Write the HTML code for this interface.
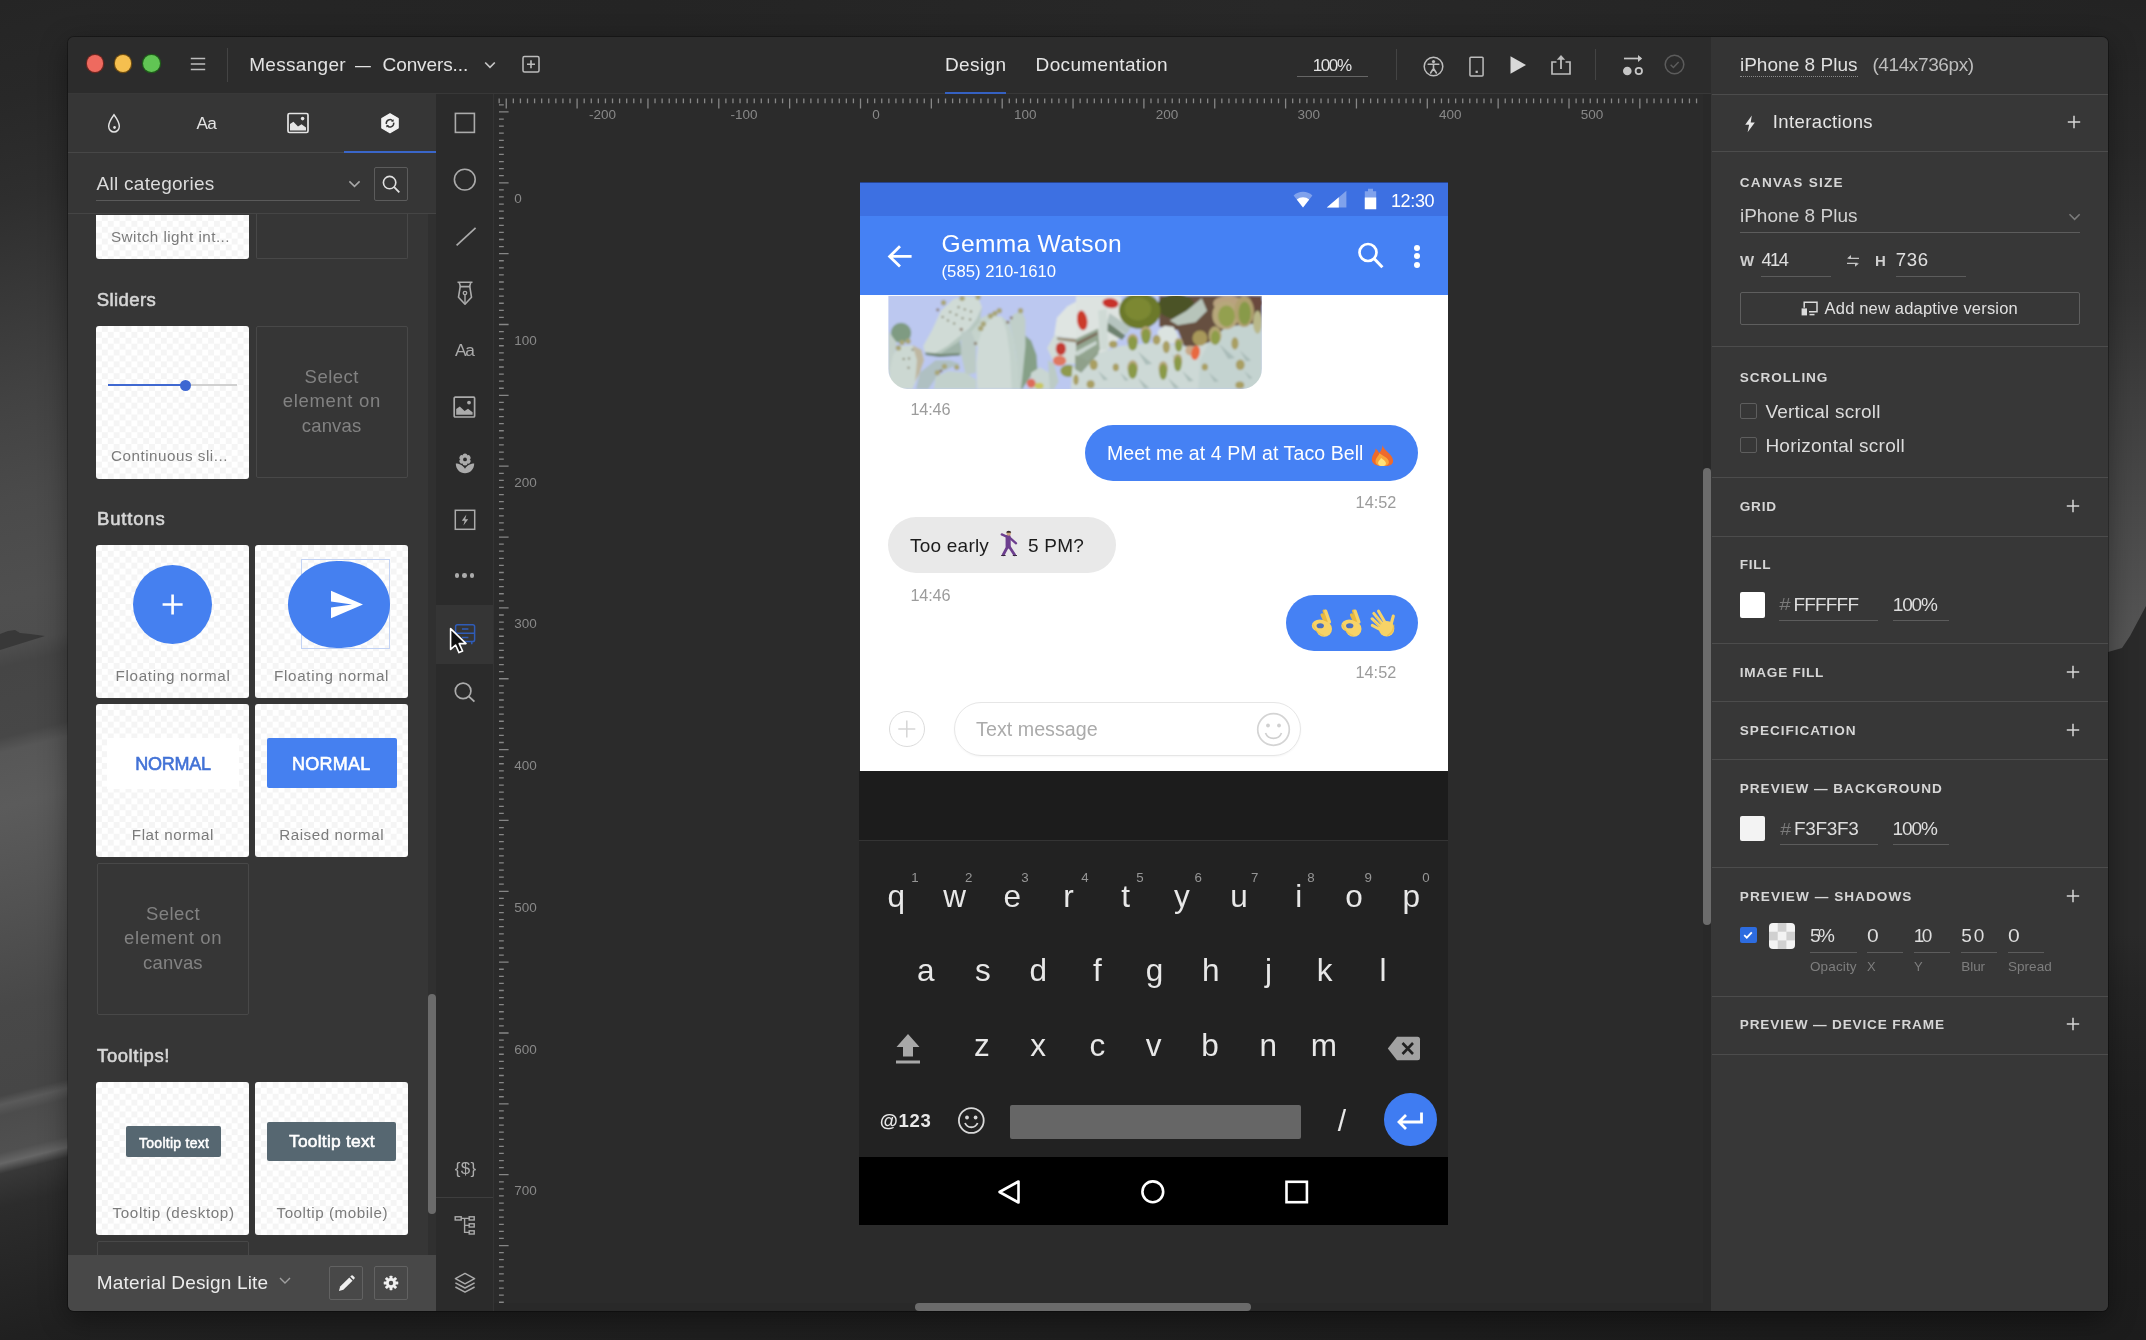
<!DOCTYPE html>
<html lang="en"><head><meta charset="utf-8"><title>Messanger - Conversation</title>
<style>
*{box-sizing:border-box;margin:0;padding:0}
html,body{width:2146px;height:1340px;overflow:hidden;background:#1d1d1d}
body{position:relative;font-family:"Liberation Sans",sans-serif;-webkit-font-smoothing:antialiased}
.a{position:absolute}
.t{position:absolute;white-space:nowrap;line-height:1}
svg{position:absolute;overflow:visible}
.card{position:absolute;width:153px;height:153px;border-radius:3px;
 background:repeating-conic-gradient(#f5f5f5 0% 25%,#fff 0% 50%) 0 0/11.800px 11.800px}
.ecard{position:absolute;width:152px;height:152px;border:1px solid #484848;border-radius:2px}
.ul{position:absolute;height:1px;background:#5c5c5c}
.hr{position:absolute;left:1712px;width:396px;height:1px;background:#4c4c4c}
</style></head>
<body>
<!-- p1_bg -->
<svg width="2146" height="1340" viewBox="0 0 2146 1340" style="left:0;top:0">
<defs>
<linearGradient id="gl" x1="0" y1="0" x2="0" y2="1"><stop offset="0" stop-color="#252525"/><stop offset="0.0714" stop-color="#282828"/><stop offset="0.1429" stop-color="#2e2e2e"/><stop offset="0.2143" stop-color="#383838"/><stop offset="0.2857" stop-color="#424242"/><stop offset="0.3571" stop-color="#4a4a4a"/><stop offset="0.4286" stop-color="#4f4f4f"/><stop offset="0.4629" stop-color="#4e4e4e"/><stop offset="0.4771" stop-color="#454545"/><stop offset="0.5271" stop-color="#474747"/><stop offset="0.5379" stop-color="#575757"/><stop offset="0.5771" stop-color="#5b5b5b"/><stop offset="0.6486" stop-color="#525252"/><stop offset="0.72" stop-color="#484848"/><stop offset="0.7829" stop-color="#464646"/><stop offset="0.7893" stop-color="#5a5a5a"/><stop offset="0.7971" stop-color="#4c4c4c"/><stop offset="0.8236" stop-color="#505050"/><stop offset="0.8314" stop-color="#666666"/><stop offset="0.8386" stop-color="#383838"/><stop offset="0.8629" stop-color="#2c2c2c"/><stop offset="0.9571" stop-color="#202020"/><stop offset="1" stop-color="#1e1e1e"/></linearGradient>
<linearGradient id="gr" x1="0" y1="0" x2="0" y2="1"><stop offset="0" stop-color="#232323"/><stop offset="0.1119" stop-color="#292929"/><stop offset="0.2239" stop-color="#343434"/><stop offset="0.2985" stop-color="#3f3f3f"/><stop offset="0.3881" stop-color="#4a4a4a"/><stop offset="0.4776" stop-color="#555555"/><stop offset="1" stop-color="#555555"/></linearGradient>
<linearGradient id="gd" x1="0" y1="0" x2="0" y2="1"><stop offset="0.4478" stop-color="#2a2a2a"/><stop offset="0.5224" stop-color="#252525"/><stop offset="0.6716" stop-color="#202020"/><stop offset="1" stop-color="#1c1c1c"/></linearGradient>
<linearGradient id="gt" x1="0" y1="0" x2="1" y2="0"><stop offset="0" stop-color="#262626"/><stop offset="0.3" stop-color="#242424"/><stop offset="0.6" stop-color="#282828"/><stop offset="1" stop-color="#232323"/></linearGradient>
<linearGradient id="gb" x1="0" y1="0" x2="1" y2="0"><stop offset="0" stop-color="#212121"/><stop offset="0.5" stop-color="#1e1e1e"/><stop offset="1" stop-color="#1b1b1b"/></linearGradient>
</defs>
<rect width="2146" height="1340" fill="#1e1e1e"/>
<rect x="0" y="0" width="2146" height="44" fill="url(#gt)"/>
<rect x="0" y="1296" width="2146" height="44" fill="url(#gb)"/>
<rect x="0" y="0" width="90" height="1400" fill="url(#gl)" transform="skewY(-14)"/>
<path d="M0 634L8 631L15 630L20 633L30 634L45 636L0 650Z" fill="#383838"/>
<rect x="2090" y="0" width="56" height="1340" fill="url(#gr)"/>
<path d="M2090 655L2108 652L2122 648L2130 636L2146 606V1340H2090Z" fill="url(#gd)"/>
</svg>
<!-- p2_title -->
<div class="a" style="left:68px;top:37px;width:2040px;height:1274px;background:#2b2b2b;border-radius:6px;box-shadow:0 8px 28px rgba(0,0,0,.4),0 0 0 1px rgba(0,0,0,.3);"></div>
<div class="a" id="win" style="left:0;top:0;width:2146px;height:1340px;clip-path:inset(37px 38px 29px 68px round 6px);will-change:transform">
<div class="a" style="left:68px;top:37px;width:1643px;height:57px;background:#2c2c2c;"></div>
<div class="a" style="left:68px;top:93px;width:1643px;height:1px;background:#383838;"></div>
<div class="a" style="left:1711px;top:37px;width:397px;height:1274px;background:#373737;"></div>
<div class="a" style="left:1711px;top:37px;width:397px;height:57px;background:#343434;"></div>
<div class="a" style="left:68px;top:94px;width:368px;height:1217px;background:#363636;"></div>
<div class="a" style="left:436px;top:94px;width:57px;height:1217px;background:#2b2b2b;"></div>
<div class="a" style="left:493px;top:94px;width:1218px;height:1217px;background:#2b2b2b;"></div>
<div class="a" style="left:86.5px;top:55.2px;width:16.8px;height:16.8px;background:#ee6a5f;border-radius:50%;box-shadow:0 0 0 1.200px #6b2620;"></div>
<div class="a" style="left:114.69999999999999px;top:55.2px;width:16.8px;height:16.8px;background:#f5bf4f;border-radius:50%;box-shadow:0 0 0 1.200px #6e4c10;"></div>
<div class="a" style="left:143.0px;top:55.2px;width:16.8px;height:16.8px;background:#61c554;border-radius:50%;box-shadow:0 0 0 1.200px #1f5a1a;"></div>
<svg style="left:190px;top:56px" width="16" height="16" viewBox="0 0 16 16"><path d="M0.8 2.6h14.4M0.8 8h14.4M0.8 13.4h14.4" stroke="#bdbdbd" stroke-width="1.5" fill="none"/></svg>
<div class="a" style="left:227px;top:48px;width:1px;height:34px;background:#444;"></div>
<span class="t" style="left:249.2px;top:55.0px;font-size:19px;color:#e2e2e2;letter-spacing:0.30px;">Messanger</span>
<span class="t" style="left:355.0px;top:55.0px;font-size:19px;color:#e2e2e2;transform:scaleX(0.832);transform-origin:0 0;">—</span>
<span class="t" style="left:382.6px;top:55.0px;font-size:19px;color:#e2e2e2;letter-spacing:-0.11px;">Convers...</span>
<svg style="left:484px;top:60px" width="12" height="10" viewBox="0 0 12 10"><path d="M1.2 2.5L6 7.3L10.8 2.5" stroke="#c6c6c6" stroke-width="1.7" fill="none"/></svg>
<svg style="left:522px;top:55px" width="18" height="18" viewBox="0 0 18 18"><rect x="1" y="1.5" width="16" height="15.5" rx="1.5" stroke="#bdbdbd" stroke-width="1.5" fill="none"/><path d="M9 5.2v8M5 9.2h8" stroke="#bdbdbd" stroke-width="1.6"/></svg>
<span class="t" style="left:945.0px;top:55.0px;font-size:19px;color:#e6e6e6;letter-spacing:0.37px;">Design</span>
<span class="t" style="left:1035.6px;top:55.0px;font-size:19px;color:#e6e6e6;letter-spacing:0.34px;">Documentation</span>
<div class="a" style="left:945px;top:92.4px;width:61px;height:2px;background:#3561c2;"></div>
<span class="t" style="left:1312.7px;top:56.5px;font-size:17px;color:#e2e2e2;letter-spacing:-1.39px;">100%</span>
<div class="a" style="left:1297px;top:76px;width:71px;height:1px;background:#666;"></div>
<div class="a" style="left:1396px;top:49px;width:1px;height:31px;background:#444;"></div>
<div class="a" style="left:1595px;top:49px;width:1px;height:31px;background:#444;"></div>
<svg style="left:1423px;top:56px" width="21" height="21" viewBox="0 0 21 21"><circle cx="10.5" cy="10.5" r="9.3" stroke="#bdbdbd" stroke-width="1.5" fill="none"/><circle cx="10.5" cy="5.6" r="1.6" fill="#bdbdbd"/><path d="M5.2 8.2h10.6M10.5 8.2v4.5M10.5 12.5L7.6 17M10.5 12.5L13.4 17" stroke="#bdbdbd" stroke-width="1.6" fill="none" stroke-linecap="round"/></svg>
<svg style="left:1468.500px;top:56px" width="15" height="21" viewBox="0 0 16 22"><rect x="1" y="1" width="14" height="20" rx="1" stroke="#bdbdbd" stroke-width="1.6" fill="none"/><rect x="7" y="15.5" width="2.4" height="2.4" fill="#bdbdbd"/></svg>
<svg style="left:1509px;top:55px" width="18" height="20" viewBox="0 0 18 20"><path d="M1.5 1.2L17 10L1.5 18.8Z" fill="#d8d8d8"/></svg>
<svg style="left:1550px;top:53px" width="22" height="23" viewBox="0 0 22 23"><path d="M6.5 9H2v12h18V9h-4.5" stroke="#bdbdbd" stroke-width="1.7" fill="none"/><path d="M11 16V4" stroke="#bdbdbd" stroke-width="1.8"/><path d="M6.8 6.8L11 2l4.2 4.8z" fill="#bdbdbd"/></svg>
<svg style="left:1621px;top:54px" width="24" height="22" viewBox="0 0 24 22"><path d="M3 4.5h17" stroke="#c6c6c6" stroke-width="1.7"/><path d="M17 1l4.2 3.5L17 8z" fill="#c6c6c6"/><circle cx="6.3" cy="17" r="4.3" fill="#c6c6c6"/><circle cx="17.8" cy="17" r="3.2" stroke="#c6c6c6" stroke-width="1.8" fill="none"/></svg>
<svg style="left:1664px;top:54px" width="21" height="21" viewBox="0 0 21 21"><circle cx="10.5" cy="10.5" r="9.3" stroke="#5c5c5c" stroke-width="1.5" fill="none"/><path d="M6.6 10.8l2.8 2.7L14.6 8" stroke="#5c5c5c" stroke-width="1.5" fill="none"/></svg>
<span class="t" style="left:1739.9px;top:54.8px;font-size:19px;color:#e0e0e0;letter-spacing:0.04px;">iPhone 8 Plus</span>
<div class="a" style="left:1740px;top:76px;width:118px;height:0px;border-top:1px dotted #8a8a8a;"></div>
<span class="t" style="left:1872.4px;top:54.8px;font-size:19px;color:#bdbdbd;letter-spacing:-0.39px;">(414x736px)</span>
<!-- p3_left -->
<div class="a" style="left:68px;top:152px;width:368px;height:1px;background:#474747;"></div>
<div class="a" style="left:344px;top:151px;width:92px;height:2px;background:#3a66c9;"></div>
<svg style="left:106px;top:112.500px" width="16" height="21" viewBox="0 0 18 22" preserveAspectRatio="none"><path d="M9 1.8C9 1.8 3 9.5 3 14a6 6 0 0 0 12 0C15 9.5 9 1.8 9 1.8Z" stroke="#e4e4e4" stroke-width="1.6" fill="none"/><circle cx="9.6" cy="15.2" r="1.5" fill="#e4e4e4"/></svg>
<span class="t" style="left:196.6px;top:114.6px;font-size:17.2px;color:#e4e4e4;letter-spacing:-0.74px;">Aa</span>
<svg style="left:287px;top:112px" width="22" height="22" viewBox="0 0 22 22"><rect x="1" y="1.5" width="20" height="19" rx="1.5" stroke="#e4e4e4" stroke-width="1.7" fill="none"/><path d="M3 18.5V12l3.4-2.2 4.6 4.6 3.5-2.2 4.5 3.2v3.1z" fill="#e4e4e4"/><circle cx="15.6" cy="6.6" r="1.8" fill="#e4e4e4"/></svg>
<svg style="left:379.700px;top:112.800px" width="20" height="20.6" viewBox="0 0 23 24"><path d="M11.5 1L21 6.5v11L11.5 23 2 17.500v-11z" fill="#f2f2f2" stroke="#f2f2f2" stroke-width="1.5" stroke-linejoin="round"/><path d="M7.2 12.800a4.400 4.4 0 0 1 7.6-3.6" stroke="#363636" stroke-width="1.7" fill="none"/><path d="M15.800 11.200a4.400 4.4 0 0 1-7.6 3.6" stroke="#363636" stroke-width="1.7" fill="none"/><path d="M12.600 9.800l3 .4.3-3z" fill="#363636"/><path d="M10.400 14.200l-3-.4-.3 3z" fill="#363636"/></svg>
<span class="t" style="left:96.5px;top:173.8px;font-size:19px;color:#dcdcdc;letter-spacing:0.29px;">All categories</span>
<svg style="left:348px;top:179px" width="13" height="10" viewBox="0 0 13 10"><path d="M1.400 2.400L6.500 7.400L11.600 2.4" stroke="#a8a8a8" stroke-width="1.5" fill="none"/></svg>
<div class="a" style="left:96px;top:200px;width:264px;height:1px;background:#5a5a5a;"></div>
<div class="a" style="left:374px;top:167px;width:34px;height:34px;border:1px solid #5c5c5c;border-radius:2px;"></div>
<svg style="left:381px;top:174px" width="20" height="20" viewBox="0 0 20 20"><circle cx="8.6" cy="8.6" r="6.2" stroke="#e0e0e0" stroke-width="1.6" fill="none"/><path d="M13.200 13.200L18.300 18.3" stroke="#e0e0e0" stroke-width="1.8"/></svg>
<div class="a" style="left:68px;top:213px;width:368px;height:1px;background:#454545;"></div>
<div class="a" style="left:428px;top:214px;width:8px;height:1041px;background:#303030;"></div>
<div class="a" style="left:428px;top:993.5px;width:8px;height:220px;background:#6b6b6b;border-radius:4px;"></div>
<div class="card" style="left:96px;top:215px;height:44px;border-radius:0 0 3px 3px"></div>
<div class="ecard" style="left:255.500px;top:214px;height:45px;border-top:none;border-radius:0 0 2px 2px"></div>
<span class="t" style="left:111.0px;top:229.4px;font-size:15.2px;color:#7b7b7b;letter-spacing:0.49px;">Switch light int...</span>
<span class="t" style="left:96.7px;top:290.8px;font-size:18.5px;color:#d6d6d6;letter-spacing:0.43px;-webkit-text-stroke:0.600px #d6d6d6;">Sliders</span>
<div class="card" style="left:96px;top:325.500px"></div>
<div class="ecard" style="left:255.500px;top:326px"></div>
<div class="a" style="left:108px;top:384px;width:129px;height:2px;background:#d0d0d0;"></div>
<div class="a" style="left:108px;top:384px;width:77px;height:2.5px;background:#3f68d0;top:383.800px;"></div>
<div class="a" style="left:179.5px;top:379.6px;width:11px;height:11px;background:#3d67d2;border-radius:50%;"></div>
<span class="t" style="left:111.0px;top:448.4px;font-size:15.2px;color:#7b7b7b;letter-spacing:0.52px;">Continuous sli...</span>
<span class="t" style="left:304.6px;top:368.2px;font-size:18.5px;color:#828282;letter-spacing:0.46px;">Select</span>
<span class="t" style="left:282.8px;top:392.4px;font-size:18.5px;color:#828282;letter-spacing:0.65px;">element on</span>
<span class="t" style="left:301.7px;top:416.6px;font-size:18.5px;color:#828282;letter-spacing:0.20px;">canvas</span>
<span class="t" style="left:97.1px;top:510.4px;font-size:18.5px;color:#d6d6d6;letter-spacing:0.81px;-webkit-text-stroke:0.600px #d6d6d6;">Buttons</span>
<div class="card" style="left:96px;top:545px"></div>
<div class="card" style="left:255px;top:545px"></div>
<div class="a" style="left:132.8px;top:564.5px;width:79.6px;height:79.6px;background:#4580f0;border-radius:50%;"></div>
<svg style="left:162px;top:594px" width="21" height="21" viewBox="0 0 21 21"><path d="M10.600 0.500v20M0.600 10.500h20" stroke="#fff" stroke-width="2.6"/></svg>
<div class="a" style="left:300.9px;top:559.3px;width:89.5px;height:89.6px;border:1px solid #c3d3f4;"></div>
<div class="a" style="left:287.9px;top:560.9px;width:101.9px;height:87.3px;background:#4580f0;border-radius:50%/52%;"></div>
<svg style="left:330px;top:590px" width="34" height="29" viewBox="0 0 34 29"><path d="M1 0.700L33 14.500L1 28.300L1 17.600L22 14.500L1 11.400Z" fill="#fff"/></svg>
<span class="t" style="left:115.5px;top:667.9px;font-size:15.2px;color:#7b7b7b;letter-spacing:0.69px;">Floating normal</span>
<span class="t" style="left:274.0px;top:667.9px;font-size:15.2px;color:#7b7b7b;letter-spacing:0.70px;">Floating normal</span>
<div class="card" style="left:96px;top:704px"></div>
<div class="card" style="left:255px;top:704px"></div>
<div class="a" style="left:107.2px;top:738px;width:132px;height:50.6px;background:#fff;"></div>
<span class="t" style="left:135.2px;top:754.9px;font-size:18px;color:#4272d6;letter-spacing:-0.26px;-webkit-text-stroke:0.600px #4272d6;">NORMAL</span>
<div class="a" style="left:266.6px;top:738px;width:130px;height:50.2px;background:#4580f0;border-radius:2px;"></div>
<span class="t" style="left:291.9px;top:754.9px;font-size:18px;color:#fff;letter-spacing:0.28px;-webkit-text-stroke:0.600px #fff;">NORMAL</span>
<span class="t" style="left:131.8px;top:827.0px;font-size:15.2px;color:#7b7b7b;letter-spacing:0.57px;">Flat normal</span>
<span class="t" style="left:279.2px;top:827.0px;font-size:15.2px;color:#7b7b7b;letter-spacing:0.54px;">Raised normal</span>
<div class="ecard" style="left:96.500px;top:863px"></div>
<span class="t" style="left:146.0px;top:905.1px;font-size:18.5px;color:#828282;letter-spacing:0.46px;">Select</span>
<span class="t" style="left:124.1px;top:929.3px;font-size:18.5px;color:#828282;letter-spacing:0.65px;">element on</span>
<span class="t" style="left:143.0px;top:953.5px;font-size:18.5px;color:#828282;letter-spacing:0.20px;">canvas</span>
<span class="t" style="left:97.1px;top:1047.1px;font-size:18.5px;color:#d6d6d6;letter-spacing:0.55px;-webkit-text-stroke:0.600px #d6d6d6;">Tooltips!</span>
<div class="card" style="left:96px;top:1082px"></div>
<div class="card" style="left:255px;top:1082px"></div>
<div class="a" style="left:126.1px;top:1126px;width:94.8px;height:30.7px;background:#566771;border-radius:2px;"></div>
<span class="t" style="left:139.0px;top:1135.9px;font-size:14px;color:#fff;letter-spacing:0.28px;-webkit-text-stroke:0.500px #fff;">Tooltip text</span>
<div class="a" style="left:266.5px;top:1122px;width:129.9px;height:38.9px;background:#566771;border-radius:2px;"></div>
<span class="t" style="left:289.0px;top:1133.1px;font-size:17.4px;color:#fff;letter-spacing:0.23px;-webkit-text-stroke:0.600px #fff;">Tooltip text</span>
<span class="t" style="left:112.5px;top:1205.1px;font-size:15.2px;color:#7b7b7b;letter-spacing:0.63px;">Tooltip (desktop)</span>
<span class="t" style="left:276.5px;top:1205.1px;font-size:15.2px;color:#7b7b7b;letter-spacing:0.54px;">Tooltip (mobile)</span>
<div class="ecard" style="left:97px;top:1241px;height:30px"></div>
<div class="a" style="left:68px;top:1255px;width:368px;height:56px;background:#484848;"></div>
<span class="t" style="left:96.8px;top:1272.9px;font-size:19px;color:#ececec;letter-spacing:0.18px;">Material Design Lite</span>
<svg style="left:279px;top:1276px" width="12" height="9" viewBox="0 0 12 9"><path d="M1 2L6 7L11 2" stroke="#a0a0a0" stroke-width="1.4" fill="none"/></svg>
<div class="a" style="left:329px;top:1266px;width:34px;height:34px;border:1px solid #626262;border-radius:2px;"></div>
<div class="a" style="left:374px;top:1266px;width:34px;height:34px;border:1px solid #626262;border-radius:2px;"></div>
<svg style="left:337.500px;top:1274.500px" width="17" height="17" viewBox="0 0 18 18"><path d="M1 17l1.300-4.700L12 2.600l3.400 3.400L5.700 15.700z" fill="#f0f0f0"/><path d="M13 1.600l1.200-1.100a1 1 0 0 1 1.4 0l1.900 1.900a1 1 0 0 1 0 1.400L16.400 5z" fill="#f0f0f0"/></svg>
<svg style="left:383px;top:1275px" width="16" height="16" viewBox="0 0 18 18"><g fill="#f0f0f0"><circle cx="9" cy="9" r="5.6"/><rect x="7.4" y="0.8" width="3.2" height="4" rx="0.5" transform="rotate(0 9 9)"/><rect x="7.4" y="0.8" width="3.2" height="4" rx="0.5" transform="rotate(45 9 9)"/><rect x="7.4" y="0.8" width="3.2" height="4" rx="0.5" transform="rotate(90 9 9)"/><rect x="7.4" y="0.8" width="3.2" height="4" rx="0.5" transform="rotate(135 9 9)"/><rect x="7.4" y="0.8" width="3.2" height="4" rx="0.5" transform="rotate(180 9 9)"/><rect x="7.4" y="0.8" width="3.2" height="4" rx="0.5" transform="rotate(225 9 9)"/><rect x="7.4" y="0.8" width="3.2" height="4" rx="0.5" transform="rotate(270 9 9)"/><rect x="7.4" y="0.8" width="3.2" height="4" rx="0.5" transform="rotate(315 9 9)"/></g><circle cx="9" cy="9" r="2.5" fill="#484848"/></svg>
<!-- p4_tools -->
<div class="a" style="left:436px;top:605px;width:57px;height:59px;background:#353535;"></div>
<div class="a" style="left:436px;top:1197px;width:57px;height:1px;background:#3e3e3e;"></div>
<svg style="left:454px;top:112px" width="22" height="22" viewBox="0 0 22 22"><rect x="1.4" y="1.4" width="19" height="19" stroke="#ababab" stroke-width="1.6" fill="none"/></svg>
<svg style="left:453px;top:168px" width="24" height="24" viewBox="0 0 24 24"><circle cx="11.8" cy="11.6" r="10.4" stroke="#ababab" stroke-width="1.6" fill="none"/></svg>
<svg style="left:455px;top:226px" width="22" height="22" viewBox="0 0 22 22"><path d="M1.600 19.400L20.600 1.8" stroke="#ababab" stroke-width="1.7"/></svg>
<svg style="left:456px;top:281px" width="18" height="25" viewBox="0 0 18 25"><path d="M1.500 1.200h15M3.200 1.400l1.200 4.200M14.800 1.400l-1.2 4.2" stroke="#ababab" stroke-width="1.6" fill="none"/><path d="M4.200 5.600h9.600l1.700 10.600L9 23.2 2.5 16.200z" stroke="#ababab" stroke-width="1.6" fill="none" stroke-linejoin="round"/><path d="M9 22.500V13" stroke="#ababab" stroke-width="1.4"/><circle cx="9" cy="12" r="1.7" stroke="#ababab" stroke-width="1.3" fill="none"/></svg>
<span class="t" style="left:455.0px;top:341.9px;font-size:17.3px;color:#ababab;letter-spacing:-1.16px;">Aa</span>
<svg style="left:453px;top:396px" width="23" height="22" viewBox="0 0 23 22"><rect x="1.2" y="1.2" width="20.4" height="19.8" rx="1" stroke="#ababab" stroke-width="1.7" fill="none"/><path d="M3.200 18.800V13l3.600-2.6 4.8 4.6 3.4-2.2 4.6 3.400v2.600z" fill="#ababab"/><circle cx="16" cy="6.6" r="1.9" fill="#ababab"/></svg>
<svg style="left:455px;top:453px" width="20" height="21" viewBox="0 0 20 21"><g fill="#ababab"><circle cx="10" cy="2.9" r="2.5" transform="rotate(0 10 6.4)"/><circle cx="10" cy="2.9" r="2.5" transform="rotate(60 10 6.4)"/><circle cx="10" cy="2.9" r="2.5" transform="rotate(120 10 6.4)"/><circle cx="10" cy="2.9" r="2.5" transform="rotate(180 10 6.4)"/><circle cx="10" cy="2.9" r="2.5" transform="rotate(240 10 6.4)"/><circle cx="10" cy="2.9" r="2.5" transform="rotate(300 10 6.4)"/><circle cx="10" cy="6.4" r="3.6"/><path d="M0.800 10.400c3.200 0 7.2 1.6 9.2 5.4 2-3.8 6-5.4 9.2-5.4 0 5.6-4 9.8-9.2 9.800S0.800 16 0.8 10.400z"/></g><circle cx="10" cy="6.4" r="1.9" fill="#2b2b2b"/></svg>
<svg style="left:454px;top:509px" width="22" height="22" viewBox="0 0 22 22"><rect x="1.3" y="1.3" width="19.4" height="19" stroke="#ababab" stroke-width="1.5" fill="none"/><path d="M12.400 5.600L7.800 11.800h2.900l-1.3 4.8 4.8-6.400h-3z" fill="#ababab"/></svg>
<div class="a" style="left:454.59999999999997px;top:573.3px;width:4.6px;height:4.6px;background:#ababab;border-radius:50%;"></div>
<div class="a" style="left:462.2px;top:573.3px;width:4.6px;height:4.6px;background:#ababab;border-radius:50%;"></div>
<div class="a" style="left:469.8px;top:573.3px;width:4.6px;height:4.6px;background:#ababab;border-radius:50%;"></div>
<svg style="left:454px;top:623px" width="22" height="22" viewBox="0 0 22 22"><rect x="1.6" y="1.8" width="19" height="16.8" rx="1.8" stroke="#2f5cb8" stroke-width="1.5" fill="none"/><path d="M1.600 10.200h19M8 6h6.400M8 14.400h6.400M4.400 18.600v2.600M17.800 18.600v2.600" stroke="#2f5cb8" stroke-width="1.5" fill="none"/></svg>
<svg style="left:447px;top:626px" width="24" height="30" viewBox="0 0 24 30"><path d="M3.600 2.600V23.400L8.600 19L12 26.600L15.600 25L12.200 17.600H19Z" fill="#111" stroke="#fff" stroke-width="1.6" stroke-linejoin="round"/></svg>
<svg style="left:453px;top:680px" width="24" height="24" viewBox="0 0 24 24"><circle cx="10.1" cy="10.9" r="7.8" stroke="#ababab" stroke-width="1.7" fill="none"/><path d="M15.800 16.400L21.400 21.6" stroke="#ababab" stroke-width="1.9"/></svg>
<span class="t" style="left:454.8px;top:1159.9px;font-size:17px;color:#ababab;letter-spacing:0.24px;">{$}</span>
<svg style="left:454px;top:1215px" width="22" height="22" viewBox="0 0 22 22"><g stroke="#ababab" stroke-width="1.4" fill="none"><rect x="1.2" y="1.8" width="6" height="3.2"/><rect x="15.2" y="1.8" width="5" height="3.2"/><rect x="15.2" y="8.8" width="5" height="3.2"/><rect x="15.2" y="15.8" width="5" height="3.2"/><path d="M7.200 3.400h8M10.600 3.400v14h4.600M10.600 10.400h4.600"/></g></svg>
<svg style="left:454px;top:1272px" width="22" height="22" viewBox="0 0 22 22"><g stroke="#ababab" stroke-width="1.5" fill="none" stroke-linejoin="round"><path d="M11 1.400L20.600 6.6 11 11.8 1.4 6.600z"/><path d="M1.400 10.800L11 16 20.6 10.8"/><path d="M1.400 15L11 20.2 20.6 15"/></g></svg>
<!-- p5_canvas -->
<div class="a" style="left:493px;top:94px;width:1px;height:1217px;background:#343434;"></div>
<div class="a" style="left:1703px;top:94px;width:8px;height:1217px;background:#292929;"></div>
<div class="a" style="left:494px;top:1303px;width:1217px;height:8px;background:#292929;"></div>
<div class="a" style="left:1703.1px;top:467.5px;width:8px;height:457px;background:#6c6c6c;border-radius:4px;"></div>
<div class="a" style="left:914.5px;top:1302.5px;width:336px;height:8px;background:#6b6b6b;border-radius:4px;"></div>
<svg style="left:0;top:0" width="2146" height="130" viewBox="0 0 2146 130"><path d="M499.17 98.400v4.8M506.25 98.400v10.2M513.34 98.400v4.8M520.42 98.400v4.8M527.50 98.400v4.8M534.59 98.400v4.8M541.67 98.400v4.8M548.76 98.400v4.8M555.85 98.400v4.8M562.93 98.400v4.8M570.01 98.400v4.8M577.10 98.400v10.2M584.18 98.400v4.8M591.27 98.400v4.8M598.36 98.400v4.8M605.44 98.400v4.8M612.52 98.400v4.8M619.61 98.400v4.8M626.69 98.400v4.8M633.78 98.400v4.8M640.87 98.400v4.8M647.95 98.400v10.2M655.03 98.400v4.8M662.12 98.400v4.8M669.21 98.400v4.8M676.29 98.400v4.8M683.38 98.400v4.8M690.46 98.400v4.8M697.54 98.400v4.8M704.63 98.400v4.8M711.72 98.400v4.8M718.80 98.400v10.2M725.88 98.400v4.8M732.97 98.400v4.8M740.06 98.400v4.8M747.14 98.400v4.8M754.23 98.400v4.8M761.31 98.400v4.8M768.39 98.400v4.8M775.48 98.400v4.8M782.57 98.400v4.8M789.65 98.400v10.2M796.74 98.400v4.8M803.82 98.400v4.8M810.90 98.400v4.8M817.99 98.400v4.8M825.08 98.400v4.8M832.16 98.400v4.8M839.25 98.400v4.8M846.33 98.400v4.8M853.41 98.400v4.8M860.50 98.400v10.2M867.59 98.400v4.8M874.67 98.400v4.8M881.75 98.400v4.8M888.84 98.400v4.8M895.92 98.400v4.8M903.01 98.400v4.8M910.10 98.400v4.8M917.18 98.400v4.8M924.26 98.400v4.8M931.35 98.400v10.2M938.43 98.400v4.8M945.52 98.400v4.8M952.61 98.400v4.8M959.69 98.400v4.8M966.77 98.400v4.8M973.86 98.400v4.8M980.94 98.400v4.8M988.03 98.400v4.8M995.12 98.400v4.8M1002.20 98.400v10.2M1009.28 98.400v4.8M1016.37 98.400v4.8M1023.46 98.400v4.8M1030.54 98.400v4.8M1037.62 98.400v4.8M1044.71 98.400v4.8M1051.80 98.400v4.8M1058.88 98.400v4.8M1065.96 98.400v4.8M1073.05 98.400v10.2M1080.13 98.400v4.8M1087.22 98.400v4.8M1094.31 98.400v4.8M1101.39 98.400v4.8M1108.47 98.400v4.8M1115.56 98.400v4.8M1122.64 98.400v4.8M1129.73 98.400v4.8M1136.82 98.400v4.8M1143.90 98.400v10.2M1150.99 98.400v4.8M1158.07 98.400v4.8M1165.15 98.400v4.8M1172.24 98.400v4.8M1179.33 98.400v4.8M1186.41 98.400v4.8M1193.49 98.400v4.8M1200.58 98.400v4.8M1207.66 98.400v4.8M1214.75 98.400v10.2M1221.84 98.400v4.8M1228.92 98.400v4.8M1236.01 98.400v4.8M1243.09 98.400v4.8M1250.17 98.400v4.8M1257.26 98.400v4.8M1264.35 98.400v4.8M1271.43 98.400v4.8M1278.51 98.400v4.8M1285.60 98.400v10.2M1292.68 98.400v4.8M1299.77 98.400v4.8M1306.86 98.400v4.8M1313.94 98.400v4.8M1321.03 98.400v4.8M1328.11 98.400v4.8M1335.19 98.400v4.8M1342.28 98.400v4.8M1349.37 98.400v4.8M1356.45 98.400v10.2M1363.54 98.400v4.8M1370.62 98.400v4.8M1377.70 98.400v4.8M1384.79 98.400v4.8M1391.88 98.400v4.8M1398.96 98.400v4.8M1406.05 98.400v4.8M1413.13 98.400v4.8M1420.22 98.400v4.8M1427.30 98.400v10.2M1434.38 98.400v4.8M1441.47 98.400v4.8M1448.55 98.400v4.8M1455.64 98.400v4.8M1462.72 98.400v4.8M1469.81 98.400v4.8M1476.89 98.400v4.8M1483.98 98.400v4.8M1491.07 98.400v4.8M1498.15 98.400v10.2M1505.24 98.400v4.8M1512.32 98.400v4.8M1519.40 98.400v4.8M1526.49 98.400v4.8M1533.58 98.400v4.8M1540.66 98.400v4.8M1547.74 98.400v4.8M1554.83 98.400v4.8M1561.91 98.400v4.8M1569.00 98.400v10.2M1576.09 98.400v4.8M1583.17 98.400v4.8M1590.26 98.400v4.8M1597.34 98.400v4.8M1604.42 98.400v4.8M1611.51 98.400v4.8M1618.60 98.400v4.8M1625.68 98.400v4.8M1632.76 98.400v4.8M1639.85 98.400v10.2M1646.93 98.400v4.8M1654.02 98.400v4.8M1661.11 98.400v4.8M1668.19 98.400v4.8M1675.28 98.400v4.8M1682.36 98.400v4.8M1689.45 98.400v4.8M1696.53 98.400v4.8" stroke="#868686" stroke-width="1.3" fill="none"/></svg>
<svg style="left:0;top:0" width="600" height="1340" viewBox="0 0 600 1340"><path d="M499 104.87h4.8M499 111.95h9.6M499 119.04h4.8M499 126.12h4.8M499 133.21h4.8M499 140.29h4.8M499 147.38h4.8M499 154.46h4.8M499 161.55h4.8M499 168.63h4.8M499 175.72h4.8M499 182.80h9.6M499 189.89h4.8M499 196.97h4.8M499 204.06h4.8M499 211.14h4.8M499 218.23h4.8M499 225.31h4.8M499 232.40h4.8M499 239.48h4.8M499 246.56h4.8M499 253.65h9.6M499 260.74h4.8M499 267.82h4.8M499 274.91h4.8M499 281.99h4.8M499 289.08h4.8M499 296.16h4.8M499 303.25h4.8M499 310.33h4.8M499 317.42h4.8M499 324.50h9.6M499 331.59h4.8M499 338.67h4.8M499 345.75h4.8M499 352.84h4.8M499 359.93h4.8M499 367.01h4.8M499 374.10h4.8M499 381.18h4.8M499 388.26h4.8M499 395.35h9.6M499 402.44h4.8M499 409.52h4.8M499 416.61h4.8M499 423.69h4.8M499 430.77h4.8M499 437.86h4.8M499 444.94h4.8M499 452.03h4.8M499 459.12h4.8M499 466.20h9.6M499 473.29h4.8M499 480.37h4.8M499 487.45h4.8M499 494.54h4.8M499 501.62h4.8M499 508.71h4.8M499 515.80h4.8M499 522.88h4.8M499 529.97h4.8M499 537.05h9.6M499 544.13h4.8M499 551.22h4.8M499 558.31h4.8M499 565.39h4.8M499 572.48h4.8M499 579.56h4.8M499 586.64h4.8M499 593.73h4.8M499 600.82h4.8M499 607.90h9.6M499 614.99h4.8M499 622.07h4.8M499 629.15h4.8M499 636.24h4.8M499 643.33h4.8M499 650.41h4.8M499 657.50h4.8M499 664.58h4.8M499 671.66h4.8M499 678.75h9.6M499 685.84h4.8M499 692.92h4.8M499 700.01h4.8M499 707.09h4.8M499 714.17h4.8M499 721.26h4.8M499 728.35h4.8M499 735.43h4.8M499 742.52h4.8M499 749.60h9.6M499 756.68h4.8M499 763.77h4.8M499 770.86h4.8M499 777.94h4.8M499 785.03h4.8M499 792.11h4.8M499 799.19h4.8M499 806.28h4.8M499 813.37h4.8M499 820.45h9.6M499 827.54h4.8M499 834.62h4.8M499 841.70h4.8M499 848.79h4.8M499 855.88h4.8M499 862.96h4.8M499 870.05h4.8M499 877.13h4.8M499 884.21h4.8M499 891.30h9.6M499 898.38h4.8M499 905.47h4.8M499 912.56h4.8M499 919.64h4.8M499 926.72h4.8M499 933.81h4.8M499 940.89h4.8M499 947.98h4.8M499 955.07h4.8M499 962.15h9.6M499 969.23h4.8M499 976.32h4.8M499 983.40h4.8M499 990.49h4.8M499 997.58h4.8M499 1004.66h4.8M499 1011.75h4.8M499 1018.83h4.8M499 1025.91h4.8M499 1033.00h9.6M499 1040.09h4.8M499 1047.17h4.8M499 1054.26h4.8M499 1061.34h4.8M499 1068.42h4.8M499 1075.51h4.8M499 1082.60h4.8M499 1089.68h4.8M499 1096.77h4.8M499 1103.85h9.6M499 1110.93h4.8M499 1118.02h4.8M499 1125.11h4.8M499 1132.19h4.8M499 1139.28h4.8M499 1146.36h4.8M499 1153.44h4.8M499 1160.53h4.8M499 1167.62h4.8M499 1174.70h9.6M499 1181.79h4.8M499 1188.87h4.8M499 1195.95h4.8M499 1203.04h4.8M499 1210.12h4.8M499 1217.21h4.8M499 1224.29h4.8M499 1231.38h4.8M499 1238.46h4.8M499 1245.55h9.6M499 1252.63h4.8M499 1259.72h4.8M499 1266.80h4.8M499 1273.89h4.8M499 1280.97h4.8M499 1288.06h4.8M499 1295.14h4.8M499 1302.23h4.8" stroke="#868686" stroke-width="1.3" fill="none"/></svg>
<span class="t" style="left:588.9px;top:107.5px;font-size:13.5px;color:#888888;">-200</span>
<span class="t" style="left:730.6px;top:107.5px;font-size:13.5px;color:#888888;">-100</span>
<span class="t" style="left:872.3px;top:107.5px;font-size:13.5px;color:#888888;">0</span>
<span class="t" style="left:1014.0px;top:107.5px;font-size:13.5px;color:#888888;">100</span>
<span class="t" style="left:1155.7px;top:107.5px;font-size:13.5px;color:#888888;">200</span>
<span class="t" style="left:1297.4px;top:107.5px;font-size:13.5px;color:#888888;">300</span>
<span class="t" style="left:1439.1px;top:107.5px;font-size:13.5px;color:#888888;">400</span>
<span class="t" style="left:1580.8px;top:107.5px;font-size:13.5px;color:#888888;">500</span>
<span class="t" style="left:514.3px;top:192.3px;font-size:13.5px;color:#888888;">0</span>
<span class="t" style="left:514.3px;top:334.0px;font-size:13.5px;color:#888888;">100</span>
<span class="t" style="left:514.3px;top:475.7px;font-size:13.5px;color:#888888;">200</span>
<span class="t" style="left:514.3px;top:617.4px;font-size:13.5px;color:#888888;">300</span>
<span class="t" style="left:514.3px;top:759.1px;font-size:13.5px;color:#888888;">400</span>
<span class="t" style="left:514.3px;top:900.8px;font-size:13.5px;color:#888888;">500</span>
<span class="t" style="left:514.3px;top:1042.5px;font-size:13.5px;color:#888888;">600</span>
<span class="t" style="left:514.3px;top:1184.2px;font-size:13.5px;color:#888888;">700</span>
<!-- p6_phone -->
<div class="a" style="left:860px;top:183px;width:587.6px;height:33.5px;background:#3d70e2;"></div>
<div class="a" style="left:860px;top:216px;width:587.6px;height:79px;background:#4581f4;"></div>
<div class="a" style="left:860px;top:295px;width:587.6px;height:476.5px;background:#fff;"></div>
<div class="a" style="left:858.5px;top:771px;width:589.1px;height:69.5px;background:#1c1c1c;"></div>
<div class="a" style="left:858.5px;top:840px;width:589.1px;height:317px;background:#222222;border-top:1px solid #343434;"></div>
<div class="a" style="left:858.5px;top:1156.5px;width:589.1px;height:68.5px;background:#000;"></div>
<div class="a" style="left:860px;top:182.3px;width:587.6px;height:1px;background:#27448f;"></div>
<svg style="left:1293px;top:190px" width="20" height="18" viewBox="0 0 20 18"><path d="M10 17.400L0.600 5.400A14 14 0 0 1 19.4 5.400Z" fill="#fff" opacity=".35"/><path d="M10 17.400L3.800 9.500A9.400 9.4 0 0 1 16.2 9.500Z" fill="#fff"/></svg>
<svg style="left:1326px;top:190px" width="21" height="18" viewBox="0 0 21 18"><path d="M20.400 0.800V17.400H0.800Z" fill="#fff" opacity=".35"/><path d="M12.800 7.200V17.400H0.800Z" fill="#fff"/></svg>
<svg style="left:1364px;top:188px" width="13" height="22" viewBox="0 0 13 22"><path d="M4 0.800h5v2.400h3.200v18H0.800v-18H4z" fill="#fff" opacity=".35"/><rect x="0.8" y="9.5" width="11.4" height="11.7" fill="#fff"/></svg>
<span class="t" style="left:1390.9px;top:191.5px;font-size:18px;color:#fff;letter-spacing:-0.34px;">12:30</span>
<svg style="left:887px;top:244px" width="26" height="25" viewBox="0 0 26 25"><path d="M24.600 12.400H3.600M13 2.200L2.600 12.4 13 22.6" stroke="#fff" stroke-width="2.8" fill="none"/></svg>
<span class="t" style="left:941.5px;top:232.2px;font-size:24.6px;color:#fff;letter-spacing:0.30px;">Gemma Watson</span>
<span class="t" style="left:941.5px;top:263.5px;font-size:16.7px;color:#fff;letter-spacing:0.04px;">(585) 210-1610</span>
<svg style="left:1357px;top:241px" width="28" height="28" viewBox="0 0 28 28"><circle cx="11" cy="11.5" r="8.5" stroke="#fff" stroke-width="2.7" fill="none"/><path d="M17 17.500L25.400 26.3" stroke="#fff" stroke-width="3"/></svg>
<div class="a" style="left:1413.5px;top:244.5px;width:6.2px;height:6.2px;background:#fff;border-radius:50%;"></div>
<div class="a" style="left:1413.5px;top:253.00000000000003px;width:6.2px;height:6.2px;background:#fff;border-radius:50%;"></div>
<div class="a" style="left:1413.5px;top:261.5px;width:6.2px;height:6.2px;background:#fff;border-radius:50%;"></div>
<svg style="left:886px;top:293px" width="380" height="98" viewBox="0 0 4292 1107" preserveAspectRatio="none"><defs><clipPath id="cc"><path d="M25 30H4246V855a230 230 0 0 1-230 230H255a230 230 0 0 1-230-230Z"/></clipPath><filter id="bl" x="-2%" y="-5%" width="104%" height="110%"><feGaussianBlur stdDeviation="13"/></filter></defs><g clip-path="url(#cc)"><g filter="url(#bl)"><rect x="0" y="0" width="4292" height="1107" fill="#bcc8f0"/><ellipse cx="170" cy="450" rx="115" ry="115" fill="#7f9b82"/><path d="M25 430L120 560L70 900L25 900Z" fill="#c3d0cb"/><path d="M960 430L1040 300L1160 240L1260 250L1100 600L980 600Z" fill="#c5d3cc"/><path d="M440 660L830 490L860 700L600 720Z" fill="#9fb3a8"/><path d="M420 600L520 420L620 200L760 70L900 35L1040 50L1085 160L1020 300L940 400L820 500L700 600L560 680L440 670Z" fill="#d0dbd6"/><path d="M700 600L820 500L940 400L1020 300L1085 160L1060 330L960 440L840 540L620 680L560 680Z" fill="#b7c8bf"/><path d="M440 672L620 690L830 680L830 705L600 722L450 700Z" fill="#6f8573"/><path d="M1560 470L1640 540L1700 700L1710 860L1620 960L1540 1085L1500 1085Z" fill="#86a088"/><path d="M1390 330L1440 240L1530 200L1575 300L1575 600L1545 900L1525 1085L1480 1085L1470 700L1430 480Z" fill="#c0cfc9"/><path d="M850 440L960 430L1015 560L1015 900L900 930L850 700Z" fill="#bccbc6"/><path d="M380 900L560 760L720 760L840 800L600 900L480 1085L340 1085Z" fill="#afc0c2"/><path d="M540 1085L560 950L700 880L900 900L1020 980L1020 1085Z" fill="#c2d1cc"/><path d="M1030 1085L1020 800L1040 560L1100 380L1200 275L1300 262L1380 330L1440 520L1480 800L1500 1085Z" fill="#cfdad6"/><path d="M1300 262L1380 330L1440 520L1480 800L1500 1085L1420 1085L1400 700L1360 420Z" fill="#c3d2cc"/><path d="M40 880L80 700L150 600L300 590L400 640L430 760L380 900L300 1085L100 1085L25 1000Z" fill="#ccd8d2"/><path d="M300 590L400 640L430 760L380 900L330 1000L350 760Z" fill="#b9a98c" opacity="0.7"/><path d="M1620 1085L1640 900L1740 840L1840 900L1870 1085Z" fill="#c9d6d2"/><path d="M1830 760L1900 800L1950 1000L1900 1085L1850 1085Z" fill="#bccbc6"/><path d="M1900 480L1930 280L2050 150L2146 100L2146 520Z" fill="#dfe5e2"/><path d="M1820 620L1900 480L2146 520L2146 800L1900 800Z" fill="#d2dcd7"/><path d="M1930 500L2146 520L2146 560L1935 530Z" fill="#9a8f78"/><ellipse cx="1975" cy="630" rx="58" ry="72" fill="#c43a30"/><ellipse cx="1960" cy="765" rx="75" ry="58" fill="#df7860"/><ellipse cx="1640" cy="1020" rx="50" ry="50" fill="#dc6c5a"/><ellipse cx="2060" cy="880" rx="90" ry="70" fill="#8f9a4e"/><ellipse cx="1730" cy="1050" rx="50" ry="35" fill="#c9c860"/><ellipse cx="650" cy="110" rx="30" ry="30" fill="#a9a678"/><ellipse cx="860" cy="60" rx="30" ry="30" fill="#a9a678"/><ellipse cx="1040" cy="45" rx="30" ry="30" fill="#a9a678"/><ellipse cx="1280" cy="200" rx="30" ry="30" fill="#a9a678"/><ellipse cx="1230" cy="230" rx="30" ry="30" fill="#a9a678"/><ellipse cx="1180" cy="260" rx="30" ry="30" fill="#a9a678"/><ellipse cx="1100" cy="350" rx="30" ry="30" fill="#a9a678"/><ellipse cx="1070" cy="400" rx="30" ry="30" fill="#a9a678"/><ellipse cx="1520" cy="200" rx="30" ry="30" fill="#a9a678"/><ellipse cx="180" cy="560" rx="30" ry="30" fill="#a9a678"/><ellipse cx="250" cy="545" rx="30" ry="30" fill="#a9a678"/><ellipse cx="140" cy="620" rx="30" ry="30" fill="#a9a678"/><ellipse cx="660" cy="830" rx="30" ry="30" fill="#a9a678"/><ellipse cx="800" cy="840" rx="30" ry="30" fill="#a9a678"/><ellipse cx="580" cy="900" rx="30" ry="30" fill="#a9a678"/><ellipse cx="585" cy="190" rx="18" ry="18" fill="#8d7f70"/><ellipse cx="1415" cy="280" rx="18" ry="18" fill="#8d7f70"/><ellipse cx="1010" cy="570" rx="18" ry="18" fill="#8d7f70"/><ellipse cx="620" cy="880" rx="18" ry="18" fill="#8d7f70"/><ellipse cx="850" cy="410" rx="18" ry="18" fill="#8d7f70"/><ellipse cx="1375" cy="330" rx="18" ry="18" fill="#8d7f70"/><ellipse cx="640" cy="270" rx="13" ry="11" fill="#7c7a5e"/><ellipse cx="700" cy="310" rx="13" ry="11" fill="#7c7a5e"/><ellipse cx="770" cy="345" rx="13" ry="11" fill="#7c7a5e"/><ellipse cx="725" cy="215" rx="13" ry="11" fill="#7c7a5e"/><ellipse cx="795" cy="245" rx="13" ry="11" fill="#7c7a5e"/><ellipse cx="865" cy="285" rx="13" ry="11" fill="#7c7a5e"/><ellipse cx="890" cy="185" rx="13" ry="11" fill="#7c7a5e"/><ellipse cx="960" cy="210" rx="13" ry="11" fill="#7c7a5e"/><ellipse cx="950" cy="300" rx="13" ry="11" fill="#7c7a5e"/><ellipse cx="200" cy="745" rx="13" ry="11" fill="#7c7a5e"/><ellipse cx="260" cy="740" rx="13" ry="11" fill="#7c7a5e"/><ellipse cx="255" cy="845" rx="13" ry="11" fill="#7c7a5e"/><ellipse cx="300" cy="640" rx="13" ry="11" fill="#7c7a5e"/><ellipse cx="820" cy="160" rx="13" ry="11" fill="#7c7a5e"/><path d="M2146 30L2646 30L2746 400L2446 700L2146 760Z" fill="#dde3e0"/><path d="M2146 520L2396 400L2416 640L2266 760L2146 900Z" fill="#93a590"/><path d="M2146 560L2386 440L2391 470L2146 600Z" fill="#7a6a58"/><path d="M2146 660L2376 540L2381 580L2146 720Z" fill="#c9d5cf"/><path d="M2506 330L2706 480L2666 530L2496 430Z" fill="#6e8270"/><path d="M2526 230L2766 390L2716 470L2496 330Z" fill="#b5c4bf"/><path d="M2396 200L2491 180L2511 640L2426 640Z" fill="#cfdad5"/><ellipse cx="2216" cy="310" rx="58" ry="112" fill="#cb3a2c" transform="rotate(-8 2216 310)"/><ellipse cx="2536" cy="115" rx="92" ry="55" fill="#c8302c" transform="rotate(8 2536 115)"/><path d="M3086 30L4246 30L4246 420L3646 600L3386 650L3296 420L3086 380Z" fill="#66503f"/><ellipse cx="3276" cy="150" rx="210" ry="140" fill="#4c5225"/><ellipse cx="2866" cy="200" rx="235" ry="205" fill="#6c792b"/><ellipse cx="2846" cy="180" rx="150" ry="130" fill="#7b8833"/><path d="M3206 310L3396 200L3566 60L3626 200L3496 330L3296 365Z" fill="#b7c4ba"/><ellipse cx="3866" cy="120" rx="170" ry="90" fill="#b9a27f"/><ellipse cx="4126" cy="110" rx="130" ry="80" fill="#6a4a3c"/><path d="M2086 1085L2106 820L2206 900L2396 680L2646 600L3046 560L3446 610L3646 560L3846 380L4246 340L4246 1085Z" fill="#cdd9d6"/><path d="M2136 700L2266 760L2406 640L2396 690L2206 900L2136 860Z" fill="#8fa08a"/><path d="M3526 1085L3546 760L3646 560L3846 380L4246 340L4246 1085Z" fill="#c4d3d0"/><path d="M3066 430L3146 370L3246 380L3296 480L3276 570L3086 570Z" fill="#dbe3e0"/><path d="M2846 660L3006.0 800.0L2936.0 810.0Z" fill="#a3b5b2" opacity="0.8"/><path d="M2396 880L2508.0 978.0L2459.0 985.0Z" fill="#a3b5b2" opacity="0.8"/><path d="M2646 900L2742.0 984.0L2700.0 990.0Z" fill="#a3b5b2" opacity="0.8"/><path d="M2846 960L2974.0 1072.0L2918.0 1080.0Z" fill="#a3b5b2" opacity="0.8"/><path d="M3186 960L3314.0 1072.0L3258.0 1080.0Z" fill="#a3b5b2" opacity="0.8"/><path d="M3346 880L3474.0 992.0L3418.0 1000.0Z" fill="#a3b5b2" opacity="0.8"/><path d="M3226 690L3306.0 760.0L3271.0 765.0Z" fill="#a3b5b2" opacity="0.8"/><path d="M3766 580L3942.0 734.0L3865.0 745.0Z" fill="#a3b5b2" opacity="0.8"/><path d="M3996 650L4124.0 762.0L4068.0 770.0Z" fill="#a3b5b2" opacity="0.8"/><path d="M3646 900L3758.0 998.0L3709.0 1005.0Z" fill="#a3b5b2" opacity="0.8"/><path d="M4046 880L4142.0 964.0L4100.0 970.0Z" fill="#a3b5b2" opacity="0.8"/><ellipse cx="3836" cy="250" rx="150" ry="160" fill="#b7a77c"/><ellipse cx="3846" cy="260" rx="95" ry="120" fill="#93a04f"/><ellipse cx="4046" cy="210" rx="110" ry="175" fill="#b0a070"/><ellipse cx="4051" cy="230" rx="70" ry="130" fill="#889a48"/><ellipse cx="4196" cy="330" rx="50" ry="130" fill="#b9b88a"/><ellipse cx="3546" cy="510" rx="85" ry="85" fill="#a8985a"/><ellipse cx="3716" cy="480" rx="72" ry="105" fill="#b3a672"/><ellipse cx="3721" cy="505" rx="50" ry="80" fill="#8e9e4a"/><ellipse cx="2786" cy="536.25" rx="62" ry="76" fill="#b6a678"/><ellipse cx="2786" cy="569.5" rx="52.699999999999996" ry="80.75" fill="#8a9a46"/><ellipse cx="2936" cy="455" rx="62" ry="80" fill="#b6a678"/><ellipse cx="2936" cy="490" rx="52.699999999999996" ry="85" fill="#8a9a46"/><ellipse cx="3296" cy="765" rx="50" ry="80" fill="#b6a678"/><ellipse cx="3296" cy="800" rx="42.5" ry="85" fill="#8a9a46"/><ellipse cx="2786" cy="843.75" rx="60" ry="84" fill="#b6a678"/><ellipse cx="2786" cy="880.5" rx="51" ry="89.25" fill="#8a9a46"/><ellipse cx="3131" cy="853.75" rx="52" ry="84" fill="#b6a678"/><ellipse cx="3131" cy="890.5" rx="44.199999999999996" ry="89.25" fill="#8a9a46"/><ellipse cx="3306" cy="570.5" rx="46" ry="62.400000000000006" fill="#b6a678"/><ellipse cx="3306" cy="597.8" rx="39.1" ry="66.3" fill="#8a9a46"/><ellipse cx="3056" cy="530" rx="45" ry="55" fill="#a99f62"/><ellipse cx="3166" cy="610" rx="40" ry="70" fill="#a99f62"/><ellipse cx="2346" cy="810" rx="45" ry="60" fill="#a99f62"/><ellipse cx="2596" cy="840" rx="35" ry="45" fill="#a99f62"/><ellipse cx="2311" cy="1030" rx="45" ry="45" fill="#a99f62"/><ellipse cx="3941" cy="570" rx="40" ry="70" fill="#a99f62"/><ellipse cx="4001" cy="810" rx="50" ry="60" fill="#a99f62"/><ellipse cx="3601" cy="835" rx="35" ry="40" fill="#a99f62"/><ellipse cx="3996" cy="1040" rx="50" ry="40" fill="#a99f62"/><ellipse cx="2566" cy="580" rx="48" ry="40" fill="#a99f62"/><ellipse cx="2146" cy="980" rx="30" ry="60" fill="#a99f62"/><ellipse cx="3436" cy="650" rx="55" ry="55" fill="#c9a98a"/><ellipse cx="3496" cy="675" rx="48" ry="82" fill="#e8693f" transform="rotate(12 3496 675)"/></g></g></svg>
<span class="t" style="left:910.5px;top:401.1px;font-size:16.3px;color:#9c9c9c;letter-spacing:-0.20px;">14:46</span>
<div class="a" style="left:1085px;top:424.8px;width:332.8px;height:56px;background:#4581f4;border-radius:28px;"></div>
<span class="t" style="left:1106.9px;top:444.0px;font-size:19.5px;color:#fff;letter-spacing:0.08px;">Meet me at 4 PM at Taco Bell</span>
<svg style="left:1080px;top:395px" width="350" height="120" viewBox="0 0 2146 736"><path d="M1855 293C1850 335 1905 352 1918 392C1930 432 1890 436 1852 436C1815 436 1780 420 1792 380C1798 358 1812 352 1812 328C1826 338 1830 346 1834 356C1850 340 1858 318 1855 293Z" fill="#ee6a2c"/><path d="M1852 436C1822 436 1806 418 1814 396C1820 380 1832 374 1836 358C1852 372 1896 386 1894 414C1892 430 1876 436 1852 436Z" fill="#f9a53a"/><path d="M1852 436C1834 436 1824 424 1830 410C1834 400 1842 396 1846 386C1858 396 1878 404 1876 422C1874 432 1866 436 1852 436Z" fill="#ffe27a"/></svg>
<span class="t" style="left:1355.6px;top:494.4px;font-size:16.3px;color:#9c9c9c;">14:52</span>
<div class="a" style="left:888.4px;top:517px;width:227.6px;height:56px;background:#e9e9e9;border-radius:28px;"></div>
<span class="t" style="left:910.1px;top:536.0px;font-size:19px;color:#1c1c1c;letter-spacing:0.21px;">Too early</span>
<svg style="left:880px;top:500px" width="250" height="120" viewBox="0 0 2146 1030"><g stroke="#6d3f8f" stroke-linecap="round" fill="none"><path d="M1100 320L1045 295" stroke-width="20"/><path d="M1115 325L1168 372" stroke-width="20"/><path d="M1100 318V395" stroke-width="44"/><path d="M1098 395L1058 470" stroke-width="24"/><path d="M1106 395L1155 470" stroke-width="24"/></g><circle cx="1105" cy="287" r="19" fill="#c9a27c"/><path d="M1084 282a21 18 0 0 1 42 0z" fill="#33282a"/><path d="M1040 476h38M1140 476h36" stroke="#3a2a40" stroke-width="9"/></svg>
<span class="t" style="left:1028.0px;top:536.0px;font-size:19px;color:#1c1c1c;letter-spacing:0.25px;">5 PM?</span>
<span class="t" style="left:910.5px;top:586.5px;font-size:16.3px;color:#9c9c9c;letter-spacing:-0.20px;">14:46</span>
<div class="a" style="left:1286.2px;top:595px;width:131.6px;height:55.5px;background:#4581f4;border-radius:28px;"></div>
<svg style="left:1300px;top:600px" width="110" height="45" viewBox="0 0 2146 878"><g transform="translate(0 0)"><path d="M470 215L545 420M430 290L490 420" stroke="#e9b93f" stroke-width="62" stroke-linecap="round"/><path d="M500 215L575 430" stroke="#f7d367" stroke-width="62" stroke-linecap="round"/><ellipse cx="470" cy="565" rx="155" ry="150" fill="#f7d367"/><ellipse cx="385" cy="500" rx="155" ry="118" fill="#f7d367"/><ellipse cx="395" cy="503" rx="72" ry="50" fill="#4a6fc0"/><path d="M250 470Q300 640 470 700" stroke="#e9b93f" stroke-width="26" fill="none" opacity=".5"/></g><g transform="translate(575 0)"><path d="M470 215L545 420M430 290L490 420" stroke="#e9b93f" stroke-width="62" stroke-linecap="round"/><path d="M500 215L575 430" stroke="#f7d367" stroke-width="62" stroke-linecap="round"/><ellipse cx="470" cy="565" rx="155" ry="150" fill="#f7d367"/><ellipse cx="385" cy="500" rx="155" ry="118" fill="#f7d367"/><ellipse cx="395" cy="503" rx="72" ry="50" fill="#4a6fc0"/><path d="M250 470Q300 640 470 700" stroke="#e9b93f" stroke-width="26" fill="none" opacity=".5"/></g><g><path d="M1610 470L1440 260M1660 440L1530 215M1570 520L1405 365M1570 580L1410 495" stroke="#f7d367" stroke-width="58" stroke-linecap="round"/><path d="M1770 500L1820 315" stroke="#f7d367" stroke-width="62" stroke-linecap="round"/><ellipse cx="1690" cy="560" rx="150" ry="150" fill="#f7d367"/><path d="M1480 330L1590 470M1450 420L1560 520" stroke="#e9b93f" stroke-width="16" opacity=".7"/><path d="M1700 700Q1830 640 1830 480" stroke="#e9b93f" stroke-width="30" fill="none" opacity=".6"/></g></svg>
<span class="t" style="left:1355.4px;top:664.4px;font-size:16.3px;color:#9c9c9c;letter-spacing:0.05px;">14:52</span>
<div class="a" style="left:888.8px;top:711px;width:36px;height:36px;border:1.500px solid #dcdcdc;border-radius:50%;"></div>
<svg style="left:897px;top:719px" width="20" height="20" viewBox="0 0 20 20"><path d="M9.800 1.500v17M1.300 10h17" stroke="#d6d6d6" stroke-width="1.5"/></svg>
<div class="a" style="left:953.8px;top:701.7px;width:347px;height:54.6px;border:1px solid #e6e6e6;border-radius:28px;box-shadow:0 1px 2px rgba(0,0,0,.04);"></div>
<span class="t" style="left:976.1px;top:719.7px;font-size:19.7px;color:#ababab;letter-spacing:0.01px;">Text message</span>
<svg style="left:1256px;top:712px" width="35" height="35" viewBox="0 0 35 35"><circle cx="17.5" cy="17.5" r="15.8" stroke="#d4d4d4" stroke-width="1.7" fill="none"/><circle cx="12" cy="13.5" r="1.9" fill="#d0d0d0"/><circle cx="23" cy="13.5" r="1.9" fill="#d0d0d0"/><path d="M9.500 21a8.600 8.6 0 0 0 16 0" stroke="#d0d0d0" stroke-width="1.7" fill="none"/></svg>
<span class="t" style="left:887.5px;top:881.2px;font-size:31.5px;color:#e8e8e8;">q</span>
<span class="t" style="left:911.3px;top:870.5px;font-size:13.3px;color:#969696;">1</span>
<span class="t" style="left:943.3px;top:881.2px;font-size:31.5px;color:#e8e8e8;">w</span>
<span class="t" style="left:964.9px;top:870.5px;font-size:13.3px;color:#969696;">2</span>
<span class="t" style="left:1003.4px;top:881.2px;font-size:31.5px;color:#e8e8e8;">e</span>
<span class="t" style="left:1021.3px;top:870.5px;font-size:13.3px;color:#969696;">3</span>
<span class="t" style="left:1063.3px;top:881.2px;font-size:31.5px;color:#e8e8e8;">r</span>
<span class="t" style="left:1081.2px;top:870.5px;font-size:13.3px;color:#969696;">4</span>
<span class="t" style="left:1121.2px;top:881.2px;font-size:31.5px;color:#e8e8e8;">t</span>
<span class="t" style="left:1136.2px;top:870.5px;font-size:13.3px;color:#969696;">5</span>
<span class="t" style="left:1173.9px;top:881.2px;font-size:31.5px;color:#e8e8e8;">y</span>
<span class="t" style="left:1194.5px;top:870.5px;font-size:13.3px;color:#969696;">6</span>
<span class="t" style="left:1230.2px;top:881.2px;font-size:31.5px;color:#e8e8e8;">u</span>
<span class="t" style="left:1250.9px;top:870.5px;font-size:13.3px;color:#969696;">7</span>
<span class="t" style="left:1295.2px;top:881.2px;font-size:31.5px;color:#e8e8e8;">i</span>
<span class="t" style="left:1307.2px;top:870.5px;font-size:13.3px;color:#969696;">8</span>
<span class="t" style="left:1345.2px;top:881.2px;font-size:31.5px;color:#e8e8e8;">o</span>
<span class="t" style="left:1364.4px;top:870.5px;font-size:13.3px;color:#969696;">9</span>
<span class="t" style="left:1402.4px;top:881.2px;font-size:31.5px;color:#e8e8e8;">p</span>
<span class="t" style="left:1422.2px;top:870.5px;font-size:13.3px;color:#969696;">0</span>
<span class="t" style="left:916.9px;top:954.9px;font-size:31.5px;color:#e8e8e8;">a</span>
<span class="t" style="left:974.9px;top:954.9px;font-size:31.5px;color:#e8e8e8;">s</span>
<span class="t" style="left:1029.4px;top:954.9px;font-size:31.5px;color:#e8e8e8;">d</span>
<span class="t" style="left:1093.1px;top:954.9px;font-size:31.5px;color:#e8e8e8;">f</span>
<span class="t" style="left:1145.8px;top:954.9px;font-size:31.5px;color:#e8e8e8;">g</span>
<span class="t" style="left:1202.0px;top:954.9px;font-size:31.5px;color:#e8e8e8;">h</span>
<span class="t" style="left:1264.9px;top:954.9px;font-size:31.5px;color:#e8e8e8;">j</span>
<span class="t" style="left:1316.7px;top:954.9px;font-size:31.5px;color:#e8e8e8;">k</span>
<span class="t" style="left:1379.5px;top:954.9px;font-size:31.5px;color:#e8e8e8;">l</span>
<span class="t" style="left:974.0px;top:1029.7px;font-size:31.5px;color:#e8e8e8;">z</span>
<span class="t" style="left:1030.3px;top:1029.7px;font-size:31.5px;color:#e8e8e8;">x</span>
<span class="t" style="left:1089.6px;top:1029.7px;font-size:31.5px;color:#e8e8e8;">c</span>
<span class="t" style="left:1145.8px;top:1029.7px;font-size:31.5px;color:#e8e8e8;">v</span>
<span class="t" style="left:1201.2px;top:1029.7px;font-size:31.5px;color:#e8e8e8;">b</span>
<span class="t" style="left:1259.6px;top:1029.7px;font-size:31.5px;color:#e8e8e8;">n</span>
<span class="t" style="left:1310.7px;top:1029.7px;font-size:31.5px;color:#e8e8e8;">m</span>
<svg style="left:895px;top:1033px" width="26" height="32" viewBox="0 0 26 32"><path d="M13 1L24.500 14H18V23.500H8V14H1.500Z" fill="#a8a8a8"/><rect x="1" y="27.5" width="24" height="3" fill="#a8a8a8"/></svg>
<svg style="left:1387px;top:1036px" width="34" height="25" viewBox="0 0 34 25"><path d="M10 0.800H30.500a2.500 2.5 0 0 1 2.5 2.500V21.700a2.500 2.5 0 0 1-2.5 2.500H10L0.800 12.500Z" fill="#a2a2a2"/><path d="M15.500 7l10.500 11M26 7L15.500 18" stroke="#222" stroke-width="2.6"/></svg>
<span class="t" style="left:879.8px;top:1112.4px;font-size:18.5px;color:#e8e8e8;font-weight:700;letter-spacing:0.73px;">@123</span>
<svg style="left:957px;top:1106px" width="29" height="29" viewBox="0 0 29 29"><circle cx="14.3" cy="14.5" r="12.4" stroke="#d8d8d8" stroke-width="1.8" fill="none"/><circle cx="10" cy="11.5" r="1.9" fill="#d8d8d8"/><circle cx="18.6" cy="11.5" r="1.9" fill="#d8d8d8"/><path d="M8 17a6.800 6.8 0 0 0 12.6 0" stroke="#d8d8d8" stroke-width="1.8" fill="none"/></svg>
<div class="a" style="left:1010px;top:1105px;width:291px;height:33.6px;background:#666;border-radius:2px;"></div>
<span class="t" style="left:1337.8px;top:1105.9px;font-size:30px;color:#e8e8e8;">/</span>
<div class="a" style="left:1384px;top:1093.3px;width:52.6px;height:52.6px;background:#3f7cf2;border-radius:50%;"></div>
<svg style="left:1396px;top:1110px" width="28" height="22" viewBox="0 0 28 22"><path d="M25.500 2.500V12H3.500M10 5L3 12l7 7" stroke="#fff" stroke-width="2.8" fill="none"/></svg>
<svg style="left:996px;top:1179px" width="26" height="26" viewBox="0 0 26 26"><path d="M22.500 2.500V23.500L3.500 13Z" stroke="#fff" stroke-width="2.6" fill="none" stroke-linejoin="round"/></svg>
<svg style="left:1140px;top:1179px" width="26" height="26" viewBox="0 0 26 26"><circle cx="12.8" cy="12.8" r="10.4" stroke="#fff" stroke-width="2.6" fill="none"/></svg>
<svg style="left:1284px;top:1179px" width="26" height="26" viewBox="0 0 26 26"><rect x="2.5" y="2.8" width="20.4" height="20.4" stroke="#fff" stroke-width="2.6" fill="none"/></svg>
<!-- p7_right -->
<div class="hr" style="top:93.500px"></div>
<svg style="left:1744px;top:115px" width="12" height="18" viewBox="0 0 12 18"><path d="M7.800 0.600L1.200 9.800h3.900L3.600 17.200l7.200-9.800H6.700z" fill="#e6e6e6"/></svg>
<span class="t" style="left:1772.8px;top:113.0px;font-size:18.5px;color:#e4e4e4;letter-spacing:0.38px;">Interactions</span>
<svg style="left:2066.7px;top:115.4px" width="14" height="14" viewBox="0 0 14 14"><path d="M7 0.800v12.400M0.800 7h12.400" stroke="#d6d6d6" stroke-width="1.5"/></svg>
<div class="hr" style="top:150.500px"></div>
<span class="t" style="left:1739.8px;top:175.9px;font-size:13.6px;color:#d6d6d6;font-weight:700;letter-spacing:1.24px;">CANVAS SIZE</span>
<span class="t" style="left:1739.9px;top:206.4px;font-size:19px;color:#d2d2d2;letter-spacing:0.04px;">iPhone 8 Plus</span>
<svg style="left:2068px;top:212px" width="13" height="10" viewBox="0 0 13 10"><path d="M1.500 2.200L6.600 7.400L11.700 2.2" stroke="#7c7c7c" stroke-width="1.5" fill="none"/></svg>
<div class="ul" style="left:1740px;top:232px;width:340px"></div>
<span class="t" style="left:1739.9px;top:253.2px;font-size:15px;color:#cfcfcf;font-weight:700;transform:scaleX(0.996);transform-origin:0 0;">W</span>
<span class="t" style="left:1761.4px;top:250.7px;font-size:18.3px;color:#e0e0e0;letter-spacing:-1.47px;">414</span>
<div class="ul" style="left:1761.400px;top:275.500px;width:70px"></div>
<svg style="left:1846px;top:254px" width="14" height="14" viewBox="0 0 14 14"><path d="M2.500 4.400H13M1 9.400h10.500" stroke="#c4c4c4" stroke-width="1.4" fill="none"/><path d="M5 1v3.400H1zM9 12.800V9.400h4z" fill="#c4c4c4"/></svg>
<span class="t" style="left:1875.0px;top:253.2px;font-size:15px;color:#cfcfcf;font-weight:700;transform:scaleX(0.997);transform-origin:0 0;">H</span>
<span class="t" style="left:1895.8px;top:250.5px;font-size:18.6px;color:#e0e0e0;letter-spacing:0.58px;">736</span>
<div class="ul" style="left:1895.800px;top:275.500px;width:70.400px"></div>
<div class="a" style="left:1740px;top:292px;width:340px;height:33px;border:1px solid #5e5e5e;border-radius:2px;"></div>
<svg style="left:1801px;top:301px" width="17" height="15" viewBox="0 0 17 15"><path d="M3.200 6.800V1.200H16v9.600H8" stroke="#dcdcdc" stroke-width="1.5" fill="none"/><rect x="0.6" y="7.4" width="5.4" height="7" fill="#dcdcdc"/><path d="M8.500 13.600h5" stroke="#dcdcdc" stroke-width="1.5"/></svg>
<span class="t" style="left:1824.6px;top:300.4px;font-size:16.5px;color:#e0e0e0;letter-spacing:0.18px;">Add new adaptive version</span>
<div class="hr" style="top:346px"></div>
<span class="t" style="left:1739.8px;top:371.4px;font-size:13.6px;color:#d6d6d6;font-weight:700;letter-spacing:0.95px;">SCROLLING</span>
<div class="a" style="left:1740px;top:403px;width:16.5px;height:16px;border:1px solid #5e5e5e;border-radius:2px;"></div>
<span class="t" style="left:1765.4px;top:401.9px;font-size:19px;color:#dcdcdc;letter-spacing:0.23px;">Vertical scroll</span>
<div class="a" style="left:1740px;top:437px;width:16.5px;height:16px;border:1px solid #5e5e5e;border-radius:2px;"></div>
<span class="t" style="left:1765.4px;top:435.9px;font-size:19px;color:#dcdcdc;letter-spacing:0.26px;">Horizontal scroll</span>
<div class="hr" style="top:477px"></div>
<span class="t" style="left:1739.8px;top:500.1px;font-size:13.6px;color:#d6d6d6;font-weight:700;letter-spacing:0.73px;">GRID</span>
<svg style="left:2066px;top:499px" width="14" height="14" viewBox="0 0 14 14"><path d="M7 0.800v12.400M0.800 7h12.400" stroke="#d6d6d6" stroke-width="1.5"/></svg>
<div class="hr" style="top:535.500px"></div>
<span class="t" style="left:1739.8px;top:558.0px;font-size:13.6px;color:#d6d6d6;font-weight:700;letter-spacing:0.73px;">FILL</span>
<div class="a" style="left:1739.8px;top:592px;width:25.6px;height:25.6px;background:#fff;border-radius:2px;"></div>
<span class="t" style="left:1779.4px;top:596.2px;font-size:17px;color:#7a7a7a;transform:scaleX(1.195);transform-origin:0 0;font-style:italic;">#</span>
<span class="t" style="left:1793.5px;top:594.8px;font-size:19px;color:#dedede;letter-spacing:-0.83px;">FFFFFF</span>
<div class="ul" style="left:1779.400px;top:620px;width:99px"></div>
<span class="t" style="left:1892.7px;top:594.8px;font-size:19px;color:#dedede;letter-spacing:-1.10px;">100%</span>
<div class="ul" style="left:1892.700px;top:620px;width:56.200px"></div>
<div class="hr" style="top:643px"></div>
<span class="t" style="left:1739.8px;top:666.0px;font-size:13.6px;color:#d6d6d6;font-weight:700;letter-spacing:0.72px;">IMAGE FILL</span>
<svg style="left:2066px;top:665px" width="14" height="14" viewBox="0 0 14 14"><path d="M7 0.800v12.400M0.800 7h12.400" stroke="#d6d6d6" stroke-width="1.5"/></svg>
<div class="hr" style="top:701px"></div>
<span class="t" style="left:1739.8px;top:723.9px;font-size:13.6px;color:#d6d6d6;font-weight:700;letter-spacing:0.98px;">SPECIFICATION</span>
<svg style="left:2066px;top:723px" width="14" height="14" viewBox="0 0 14 14"><path d="M7 0.800v12.400M0.800 7h12.400" stroke="#d6d6d6" stroke-width="1.5"/></svg>
<div class="hr" style="top:759px"></div>
<span class="t" style="left:1739.8px;top:782.4px;font-size:13.6px;color:#d6d6d6;font-weight:700;letter-spacing:0.97px;">PREVIEW — BACKGROUND</span>
<div class="a" style="left:1739.8px;top:815.8px;width:25.6px;height:25.6px;background:#f3f3f3;border-radius:2px;"></div>
<span class="t" style="left:1779.6px;top:820.5px;font-size:17px;color:#7a7a7a;transform:scaleX(1.142);transform-origin:0 0;font-style:italic;">#</span>
<span class="t" style="left:1793.9px;top:819.1px;font-size:19px;color:#dedede;letter-spacing:-0.32px;">F3F3F3</span>
<div class="ul" style="left:1779.600px;top:844px;width:98.600px"></div>
<span class="t" style="left:1892.5px;top:819.1px;font-size:19px;color:#dedede;letter-spacing:-1.03px;">100%</span>
<div class="ul" style="left:1892.500px;top:844px;width:56.300px"></div>
<div class="hr" style="top:867px"></div>
<span class="t" style="left:1739.8px;top:889.9px;font-size:13.6px;color:#d6d6d6;font-weight:700;letter-spacing:1.05px;">PREVIEW — SHADOWS</span>
<svg style="left:2066px;top:889px" width="14" height="14" viewBox="0 0 14 14"><path d="M7 0.800v12.400M0.800 7h12.400" stroke="#d6d6d6" stroke-width="1.5"/></svg>
<div class="a" style="left:1739.8px;top:926.6px;width:16.8px;height:16.9px;background:#2d6ce0;border-radius:2px;"></div>
<svg style="left:1742px;top:929px" width="12" height="12" viewBox="0 0 12 12"><path d="M2.200 6.200l2.600 2.5 5-5.4" stroke="#fff" stroke-width="1.8" fill="none"/></svg>
<div class="a" style="left:1769.2px;top:923.1px;width:26px;height:26px;background:#f4f4f4;border-radius:4px;background:repeating-conic-gradient(#d0d0d0 0% 25%,#f3f3f3 0% 50%) 0 0/17.400px 17.400px;"></div>
<span class="t" style="left:1809.9px;top:925.9px;font-size:19px;color:#dedede;letter-spacing:-2.36px;">5%</span>
<div class="ul" style="left:1809.9px;top:951.500px;width:46.7px"></div>
<span class="t" style="left:1867.4px;top:925.9px;font-size:19px;color:#dedede;transform:scaleX(1.107);transform-origin:0 0;">0</span>
<div class="ul" style="left:1867.4px;top:951.500px;width:35.9px"></div>
<span class="t" style="left:1913.7px;top:925.9px;font-size:19px;color:#dedede;letter-spacing:-2.53px;">10</span>
<div class="ul" style="left:1913.7px;top:951.500px;width:36.3px"></div>
<span class="t" style="left:1961.3px;top:925.9px;font-size:19px;color:#dedede;letter-spacing:1.77px;">50</span>
<div class="ul" style="left:1961.3px;top:951.500px;width:35.9px"></div>
<span class="t" style="left:2008.0px;top:925.9px;font-size:19px;color:#dedede;transform:scaleX(1.107);transform-origin:0 0;">0</span>
<div class="ul" style="left:2008px;top:951.500px;width:36.0px"></div>
<span class="t" style="left:1809.9px;top:960.1px;font-size:13.5px;color:#7e7e7e;letter-spacing:0.16px;">Opacity</span>
<span class="t" style="left:1867.4px;top:960.1px;font-size:13.5px;color:#7e7e7e;transform:scaleX(0.955);transform-origin:0 0;">X</span>
<span class="t" style="left:1913.7px;top:960.1px;font-size:13.5px;color:#7e7e7e;transform:scaleX(0.966);transform-origin:0 0;">Y</span>
<span class="t" style="left:1961.3px;top:960.1px;font-size:13.5px;color:#7e7e7e;letter-spacing:-0.07px;">Blur</span>
<span class="t" style="left:2008.0px;top:960.1px;font-size:13.5px;color:#7e7e7e;letter-spacing:0.03px;">Spread</span>
<div class="hr" style="top:995.500px"></div>
<span class="t" style="left:1739.8px;top:1018.4px;font-size:13.6px;color:#d6d6d6;font-weight:700;letter-spacing:0.84px;">PREVIEW — DEVICE FRAME</span>
<svg style="left:2066px;top:1017.4000000000001px" width="14" height="14" viewBox="0 0 14 14"><path d="M7 0.800v12.400M0.800 7h12.400" stroke="#d6d6d6" stroke-width="1.5"/></svg>
<div class="hr" style="top:1054px"></div>
</div>
</body></html>
